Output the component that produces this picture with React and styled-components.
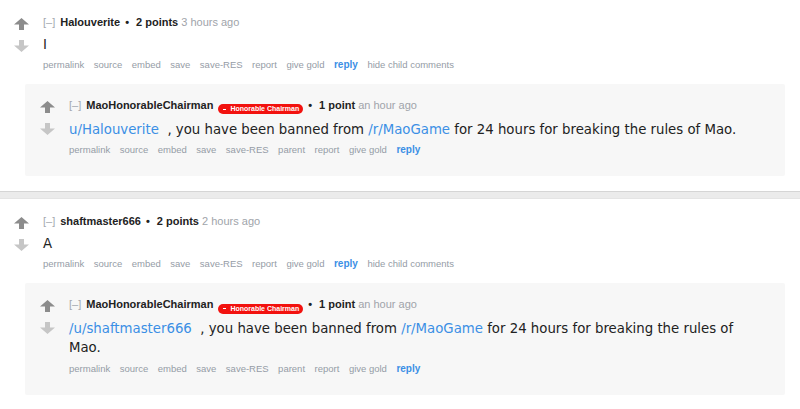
import React from "react";
import styled, { createGlobalStyle } from "styled-components";

const Global = createGlobalStyle`
  html, body { margin: 0; padding: 0; background: #fff; }
  body { font-family: "Liberation Sans", Arial, sans-serif; }
`;

const Page = styled.div`
  width: 800px;
  height: 409px;
  overflow: hidden;
  background: #fff;
`;

const Thing = styled.div`
  padding: 15px 15px 15px 14px;
`;

const Separator = styled.div`
  height: 6px;
  background: #ebebeb;
  border-top: 1px solid #d5d5d5;
  border-bottom: 1px solid #e4e4e4;
`;

const Row = styled.div`
  display: flex;
  align-items: flex-start;
`;

const Midcol = styled.div`
  display: flex;
  flex-direction: column;
  gap: 10px;
  width: 15px;
  flex-shrink: 0;
  padding-top: 3px;
  margin-right: 14px;
`;

const Entry = styled.div`
  flex: 1;
  min-width: 0;
`;

const Children = styled.div`
  margin: 12px 0 0 11px;
`;

const ChildBox = styled.div`
  background: #f7f7f7;
  border-radius: 2px;
  padding: 14px 15px 19px 15px;
`;

const Tagline = styled.div`
  font-size: 11px;
  line-height: 14px;
  color: #a0a4aa;
  white-space: nowrap;
`;

const Expand = styled.span`
  color: #a3a9b0;
  margin-right: 5px;
`;

const Author = styled.span`
  color: #222;
  font-weight: bold;
  margin-right: 5px;
`;

const Bullet = styled.span`
  color: #222;
  font-weight: bold;
  margin-right: 7px;
`;

const Score = styled.span`
  color: #222;
  font-weight: bold;
`;

const Badge = styled.span`
  display: inline-flex;
  align-items: center;
  gap: 4px;
  height: 10px;
  padding: 0 4px 0 5px;
  margin-right: 5px;
  border-radius: 5px;
  background: #f2120f;
  color: #fff;
  font-size: 7px;
  font-weight: bold;
  line-height: 10px;
  vertical-align: -1px;
`;

const BadgeDash = styled.span`
  width: 3px;
  height: 1.5px;
  background: #fff;
`;

const Body = styled.div`
  font-family: "DejaVu Sans", Verdana, sans-serif;
  font-size: 13.3px;
  line-height: 19px;
  color: #222;
  margin: 5.5px 0 3.5px;
  max-width: 690px;
`;

const Link = styled.a`
  color: #3b8fe5;
  text-decoration: none;
`;

const Buttons = styled.ul`
  display: flex;
  align-items: baseline;
  gap: 9.5px;
  list-style: none;
  margin: 0;
  padding: 0;
  font-size: 9.5px;
  line-height: 15px;
  color: #959ca6;
  white-space: nowrap;
`;

const Button = styled.li`
  color: ${(p) => (p.$primary ? "#3b8fe5" : "#959ca6")};
  font-weight: ${(p) => (p.$primary ? "bold" : "normal")};
  font-size: ${(p) => (p.$primary ? "10px" : "9.5px")};
`;

const ArrowSvg = styled.svg`
  display: block;
  width: 15px;
  height: 12px;
`;

function Arrow({ down }) {
  return (
    <ArrowSvg viewBox="0 0 15 12">
      <polygon
        points="7.5,0 15,6.5 10,6.5 10,12 5,12 5,6.5 0,6.5"
        fill={down ? "#c6c6c6" : "#8c8c8c"}
        transform={down ? "rotate(180 7.5 6)" : undefined}
      />
    </ArrowSvg>
  );
}

function Votes() {
  return (
    <Midcol>
      <Arrow />
      <Arrow down />
    </Midcol>
  );
}

const parentButtons = ["permalink", "source", "embed", "save", "save-RES", "report", "give gold", "reply", "hide child comments"];
const childButtons = ["permalink", "source", "embed", "save", "save-RES", "parent", "report", "give gold", "reply"];

function ButtonRow({ items }) {
  return (
    <Buttons>
      {items.map((b) => (
        <Button key={b} $primary={b === "reply"}>{b}</Button>
      ))}
    </Buttons>
  );
}

function ModReply({ user }) {
  return (
    <ChildBox>
      <Row>
        <Votes />
        <Entry>
          <Tagline>
            <Expand>[–]</Expand>
            <Author>MaoHonorableChairman</Author>
            <Badge><BadgeDash />Honorable Chairman</Badge>
            <Bullet>•</Bullet>
            <Score>1 point</Score> an hour ago
          </Tagline>
          <Body>
            <Link>{user}</Link>{"\u00a0 , you have been banned from "}
            <Link>/r/MaoGame</Link> for 24 hours for breaking the rules of Mao.
          </Body>
          <ButtonRow items={childButtons} />
        </Entry>
      </Row>
    </ChildBox>
  );
}

function Comment({ author, time, text, user }) {
  return (
    <Thing>
      <Row>
        <Votes />
        <Entry>
          <Tagline>
            <Expand>[–]</Expand>
            <Author>{author}</Author>
            <Bullet>•</Bullet>
            <Score>2 points</Score> {time}
          </Tagline>
          <Body>{text}</Body>
          <ButtonRow items={parentButtons} />
        </Entry>
      </Row>
      <Children>
        <ModReply user={user} />
      </Children>
    </Thing>
  );
}

export default function App() {
  return (
    <Page>
      <Global />
      <Comment author="Halouverite" time="3 hours ago" text="I" user="u/Halouverite" />
      <Separator />
      <Comment author="shaftmaster666" time="2 hours ago" text="A" user="/u/shaftmaster666" />
    </Page>
  );
}
